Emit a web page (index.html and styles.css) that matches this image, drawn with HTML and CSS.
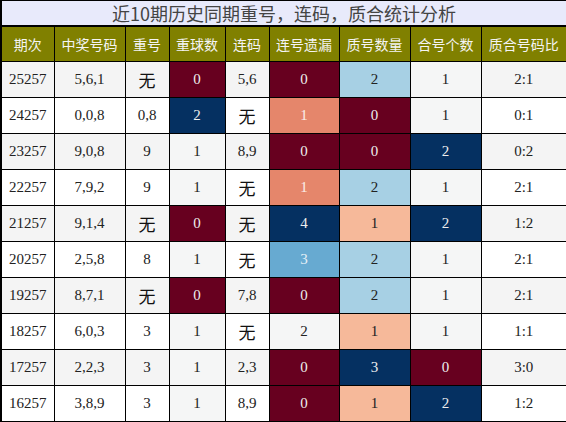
FILE: index.html
```html
<!DOCTYPE html>
<html lang="zh-CN">
<head>
	<meta charset="UTF-8">
	<title>质合统计分析</title>
	<link rel="stylesheet" href="styles.css">
</head>
<body>
	<table class="stat">
		<colgroup>
			<col class="c1"><col class="c2"><col class="c3"><col class="c4"><col class="c5">
			<col class="c6"><col class="c7"><col class="c8"><col class="c9">
		</colgroup>
		<thead>
			<tr class="title"><th colspan="9">近10期历史同期重号，连码，质合统计分析</th></tr>
			<tr class="head">
				<th>期次</th><th>中奖号码</th><th>重号</th><th>重球数</th><th>连码</th>
				<th>连号遗漏</th><th>质号数量</th><th>合号个数</th><th>质合号码比</th>
			</tr>
		</thead>
		<tbody>
			<tr class="odd">
				<td>25257</td><td>5,6,1</td><td class="wu">无</td><td class="maroon">0</td><td>5,6</td>
				<td class="maroon">0</td><td class="sky">2</td><td class="mist">1</td><td>2:1</td>
			</tr>
			<tr>
				<td>24257</td><td>0,0,8</td><td>0,8</td><td class="navy">2</td><td class="wu">无</td>
				<td class="salmon">1</td><td class="maroon">0</td><td class="mist">1</td><td>0:1</td>
			</tr>
			<tr class="odd">
				<td>23257</td><td>9,0,8</td><td>9</td><td class="mist">1</td><td>8,9</td>
				<td class="maroon">0</td><td class="maroon">0</td><td class="navy">2</td><td>0:2</td>
			</tr>
			<tr>
				<td>22257</td><td>7,9,2</td><td>9</td><td class="mist">1</td><td class="wu">无</td>
				<td class="salmon">1</td><td class="sky">2</td><td class="mist">1</td><td>2:1</td>
			</tr>
			<tr class="odd">
				<td>21257</td><td>9,1,4</td><td class="wu">无</td><td class="maroon">0</td><td class="wu">无</td>
				<td class="navy">4</td><td class="peach">1</td><td class="navy">2</td><td>1:2</td>
			</tr>
			<tr>
				<td>20257</td><td>2,5,8</td><td>8</td><td class="mist">1</td><td class="wu">无</td>
				<td class="blue">3</td><td class="sky">2</td><td class="mist">1</td><td>2:1</td>
			</tr>
			<tr class="odd">
				<td>19257</td><td>8,7,1</td><td class="wu">无</td><td class="maroon">0</td><td>7,8</td>
				<td class="maroon">0</td><td class="sky">2</td><td class="mist">1</td><td>2:1</td>
			</tr>
			<tr>
				<td>18257</td><td>6,0,3</td><td>3</td><td class="mist">1</td><td class="wu">无</td>
				<td class="mist">2</td><td class="peach">1</td><td class="mist">1</td><td>1:1</td>
			</tr>
			<tr class="odd">
				<td>17257</td><td>2,2,3</td><td>3</td><td class="mist">1</td><td>2,3</td>
				<td class="maroon">0</td><td class="navy">3</td><td class="maroon">0</td><td>3:0</td>
			</tr>
			<tr>
				<td>16257</td><td>3,8,9</td><td>3</td><td class="mist">1</td><td>8,9</td>
				<td class="maroon">0</td><td class="peach">1</td><td class="navy">2</td><td>1:2</td>
			</tr>
		</tbody>
	</table>
</body>
</html>
```

FILE: styles.css
```css
body {
	margin: 0;
	background: #fff;
}
.stat {
	width: 566px;
	table-layout: fixed;
	border-collapse: collapse;
	border: 2px solid #000;
	border-top: 1px solid #000;
	font-family: "Liberation Serif", "Noto Sans CJK SC", serif;
	font-size: 15px;
	color: #222;
}
.c1 { width: 53px; }
.c2 { width: 71px; }
.c3 { width: 44px; }
.c4 { width: 56px; }
.c5 { width: 44px; }
.c6 { width: 70px; }
.c7 { width: 71px; }
.c8 { width: 71px; }
.c9 { width: 86px; }

.stat th,
.stat td {
	border: 1px solid #000;
	padding: 0;
	text-align: center;
	font-weight: normal;
}
.title th {
	height: 24px;
	background: #e8eafb;
	border-bottom: 2px solid #000;
	font-family: "Noto Sans CJK SC", sans-serif;
	font-size: 18px;
	color: #444;
	line-height: 24px;
}
.head th {
	height: 34px;
	background: #808000;
	color: #f4f4f4;
	font-family: "Noto Sans CJK SC", sans-serif;
	font-size: 14px;
}
.stat td {
	height: 35px;
	background: #fff;
}
.stat tr.odd td {
	background: #f4f4f4;
}
.stat td.wu {
	font-family: "Noto Sans CJK SC", sans-serif;
	font-size: 17px;
	color: #111;
}

/* colour scale cells */
.stat tr td.maroon { background: #67001f; color: #eee; }
.stat tr td.navy { background: #053061; color: #eee; }
.stat tr td.salmon { background: #e5866b; color: #fbeee8; }
.stat tr td.peach { background: #f6b99a; color: #222; }
.stat tr td.sky { background: #a7d0e4; color: #222; }
.stat tr td.blue { background: #67aad1; color: #e6f0f7; }
.stat tr td.mist { background: #f5f6f6; color: #222; }
```
